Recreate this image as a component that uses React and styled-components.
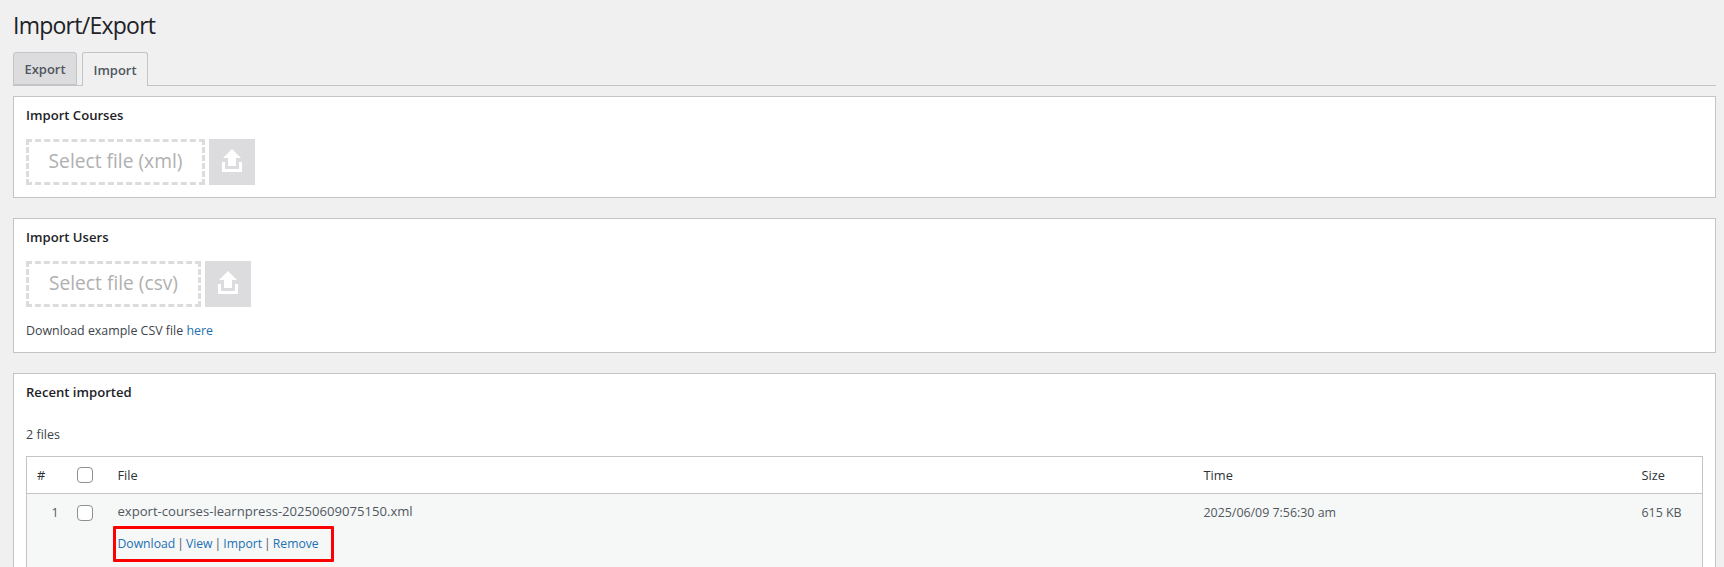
import React from 'react';
import styled, { createGlobalStyle } from 'styled-components';

const GlobalStyle = createGlobalStyle`
  html, body {
    margin: 0;
    padding: 0;
    height: 100%;
    overflow: hidden;
    background: #f0f0f1;
    color: #3c434a;
    font-family: "Open Sans", "Noto Sans", "Liberation Sans", sans-serif;
    font-size: 13px;
  }
`;

const Page = styled.div`
  padding: 0 8px 0 13px;
`;

const Title = styled.h1`
  margin: 0;
  padding: 9px 0 0;
  height: 42px;
  box-sizing: border-box;
  font-size: 23px;
  line-height: 32px;
  font-weight: 400;
  color: #1d2327;
  letter-spacing: -0.75px;
`;

const Tabs = styled.div`
  display: flex;
  gap: 5px;
  height: 33px;
  margin-top: 10px;
  border-bottom: 1px solid #c3c4c7;
`;

const Tab = styled.div`
  display: flex;
  align-items: center;
  justify-content: center;
  box-sizing: border-box;
  height: ${(props) => (props.$active ? '34px' : '33px')};
  width: ${(props) => props.$width}px;
  border: 1px solid #c3c4c7;
  border-bottom: ${(props) => (props.$active ? 'none' : '1px solid #c3c4c7')};
  border-radius: 3px 3px 0 0;
  background: ${(props) => (props.$active ? '#f0f0f1' : '#dcdcde')};
  color: #50575e;
  font-size: 13px;
  font-weight: 600;
`;

const Panel = styled.section`
  box-sizing: border-box;
  margin-top: ${(props) => props.$top}px;
  height: ${(props) => (props.$height ? `${props.$height}px` : 'auto')};
  background: #fff;
  border: 1px solid #c3c4c7;
  padding: 9px 12px 0;
`;

const PanelTitle = styled.h2`
  margin: 0;
  font-size: 13.1px;
  line-height: 18px;
  font-weight: 600;
  color: #1d2327;
`;

const UploadRow = styled.div`
  display: flex;
  gap: 4px;
  margin-top: 15px;
`;

const DropZone = styled.div`
  box-sizing: border-box;
  display: flex;
  align-items: center;
  justify-content: center;
  width: ${(props) => props.$width}px;
  height: 46px;
  padding-bottom: 4px;
  border: 3px dashed #dcdcde;
  color: #b0b0b0;
  font-size: 19.2px;
`;

const UploadButton = styled.div`
  box-sizing: border-box;
  display: flex;
  align-items: center;
  justify-content: center;
  width: 46px;
  height: 46px;
  padding-bottom: 3px;
  background: #dcdcde;
`;

const Note = styled.p`
  margin: 15px 0 0;
  font-size: 12.4px;
  line-height: 18px;
  color: #3c434a;
`;

const Link = styled.a`
  color: #2271b1;
  text-decoration: none;
`;

const FileCount = styled.p`
  margin: 25px 0 0;
  font-size: 12.5px;
  line-height: 18px;
`;

const Table = styled.table`
  width: 100%;
  margin-top: 12px;
  border-collapse: collapse;
  table-layout: fixed;
  border: 1px solid #c3c4c7;
  font-size: 12.4px;
`;

const HeadCell = styled.th`
  height: 37px;
  padding: 0 10px;
  box-sizing: border-box;
  text-align: left;
  font-weight: 400;
  font-size: 12.8px;
  color: #2c3338;
  border-bottom: 1px solid #c3c4c7;
  width: ${(props) => (props.$width ? `${props.$width}px` : 'auto')};
`;

const Row = styled.tr`
  background: #f6f7f7;
`;

const Cell = styled.td`
  padding: ${(props) => props.$pad || '10px 10px 8px'};
  vertical-align: top;
  color: #50575e;
  line-height: 18px;
  text-align: ${(props) => props.$align || 'left'};
`;

const FileName = styled.div`
  font-size: 13.1px;
`;

const CheckBox = styled.span`
  display: block;
  box-sizing: border-box;
  width: 16px;
  height: 16px;
  border: 1px solid #8c8f94;
  border-radius: 4px;
  background: #fff;
`;

const Actions = styled.div`
  box-sizing: border-box;
  display: flex;
  width: 221px;
  height: 36px;
  align-items: center;
  gap: 2px;
  margin: 6px 0 0 -5px;
  padding-left: 2px;
  border: 3px solid #f00;
  border-radius: 1px;
  color: #50575e;
  font-size: 12.2px;
`;

function UploadIcon() {
  return (
    <svg width="22" height="25" viewBox="0 0 22 25" fill="#fff">
      <path d="M11 1 L20 10 H15 V18 H7 V10 H2 Z" />
      <path d="M1 14 H4 V21 H18 V14 H21 V24 H1 Z" />
    </svg>
  );
}

export default function App() {
  return (
    <Page>
      <GlobalStyle />
      <Title>Import/Export</Title>
      <Tabs>
        <Tab $width={64}>Export</Tab>
        <Tab $width={66} $active>Import</Tab>
      </Tabs>

      <Panel $top={10} $height={102}>
        <PanelTitle>Import Courses</PanelTitle>
        <UploadRow>
          <DropZone $width={179}>Select file (xml)</DropZone>
          <UploadButton><UploadIcon /></UploadButton>
        </UploadRow>
      </Panel>

      <Panel $top={20} $height={135}>
        <PanelTitle>Import Users</PanelTitle>
        <UploadRow>
          <DropZone $width={175}>Select file (csv)</DropZone>
          <UploadButton><UploadIcon /></UploadButton>
        </UploadRow>
        <Note>Download example CSV file <Link>here</Link></Note>
      </Panel>

      <Panel $top={20}>
        <PanelTitle>Recent imported</PanelTitle>
        <FileCount>2 files</FileCount>
        <Table>
          <thead>
            <tr>
              <HeadCell $width={40}>#</HeadCell>
              <HeadCell $width={41}><CheckBox /></HeadCell>
              <HeadCell>File</HeadCell>
              <HeadCell $width={438}>Time</HeadCell>
              <HeadCell $width={71}>Size</HeadCell>
            </tr>
          </thead>
          <tbody>
            <Row>
              <Cell $align="right" $pad="10px 8px 8px 10px">1</Cell>
              <Cell $pad="11px 10px 8px"><CheckBox /></Cell>
              <Cell $pad="8px 10px 24px">
                <FileName>export-courses-learnpress-20250609075150.xml</FileName>
                <Actions>
                  <Link>Download</Link>|<Link>View</Link>|<Link>Import</Link>|<Link>Remove</Link>
                </Actions>
              </Cell>
              <Cell>2025/06/09 7:56:30 am</Cell>
              <Cell>615 KB</Cell>
            </Row>
          </tbody>
        </Table>
      </Panel>
    </Page>
  );
}
